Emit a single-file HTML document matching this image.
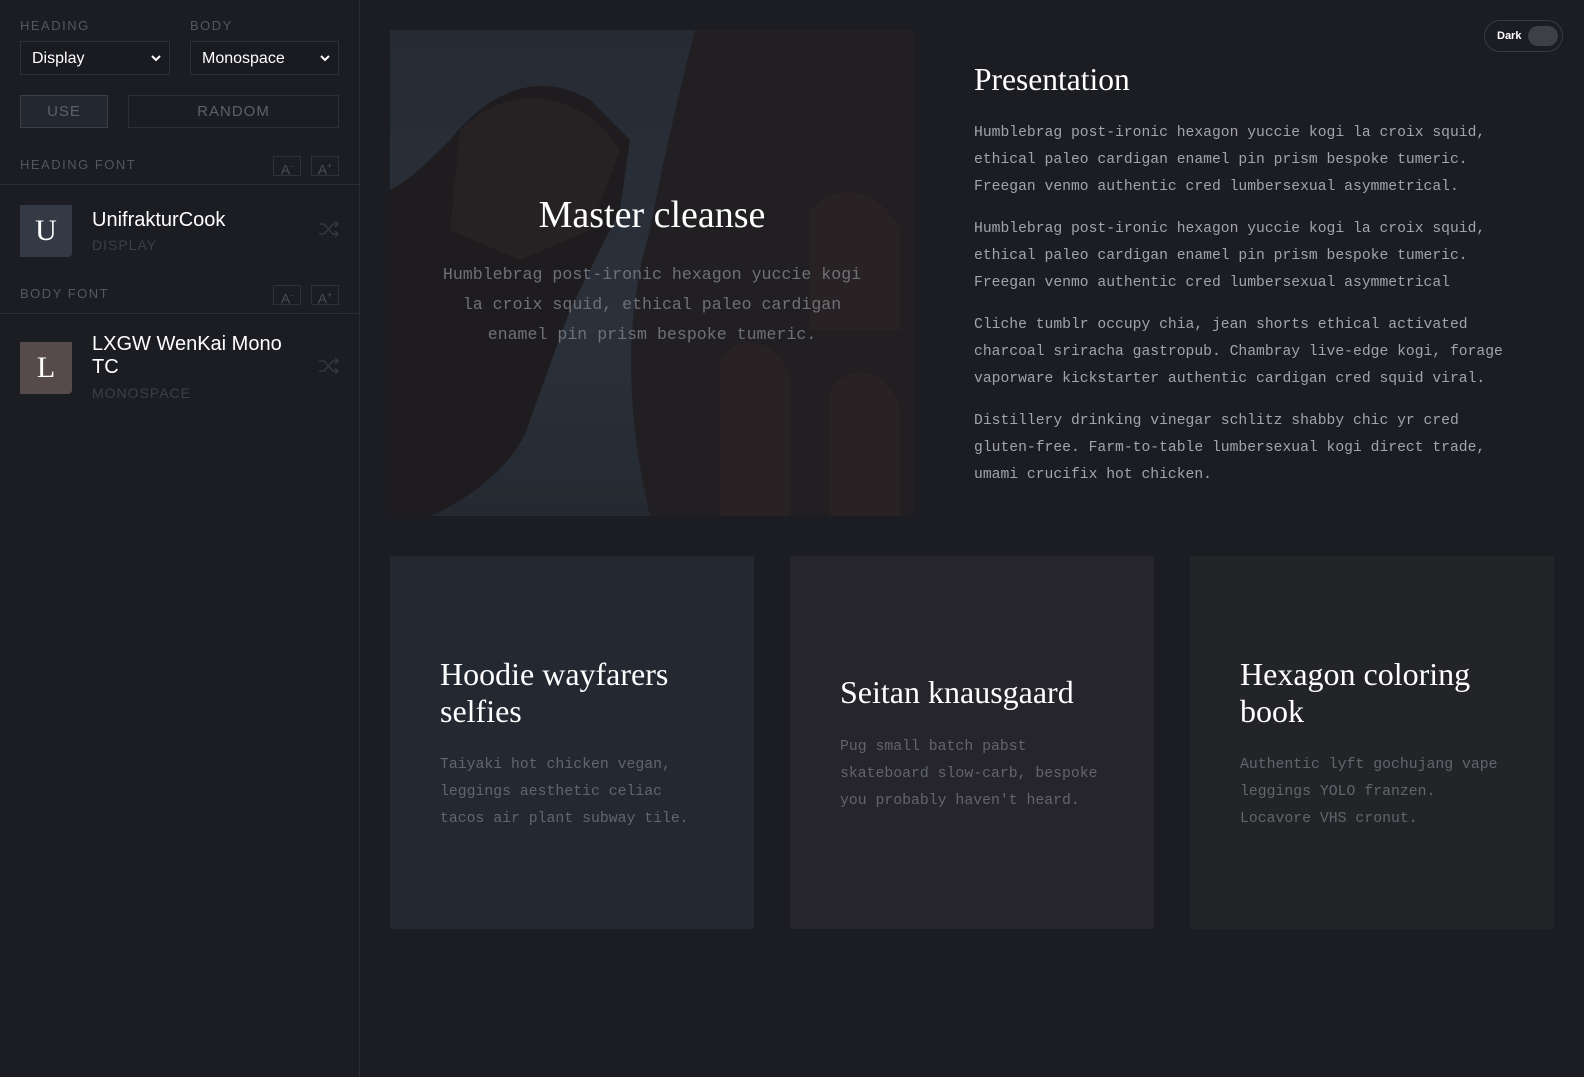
<!DOCTYPE html>
<html><head><meta charset="utf-8"><style>
*{box-sizing:border-box;margin:0;padding:0}
body{width:1584px;height:1077px;background:#1c1d22;font-family:"Liberation Sans",sans-serif;position:relative;overflow:hidden;color:#fff}
.side{position:absolute;left:0;top:0;width:360px;height:1077px;border-right:1px solid #2c2d33;background:#1c1d22}
.lbl{position:absolute;font-size:13px;letter-spacing:1.5px;color:#55575d}
.sel{position:absolute;height:34px;border:1px solid #2f3036;background:#1a1b20;font-size:16px;color:#fff;padding:8px 11px}
.sel svg{position:absolute;right:8px;top:13px}
.btn{position:absolute;height:33px;border:1px solid #34363d;font-size:15px;letter-spacing:1px;color:#5d6068;text-align:center;line-height:31px}
.ab{position:absolute;width:28px;height:20px;border:1px solid #303137;color:#4b4d53;font-size:14px;text-align:center;line-height:18px}
.hr{position:absolute;left:0;width:359px;height:1px;background:#2c2d33}
.tile{position:absolute;left:20px;width:52px;height:52px;border-radius:0 0 4px 0;font-family:"Liberation Serif",serif;font-size:30px;text-align:center;line-height:52px;color:#fff}
.nm{position:absolute;left:92px;font-size:20px;color:#fff;line-height:23px}
.sub{position:absolute;left:92px;font-size:14px;letter-spacing:1px;color:#3d3f45}
.shuf{position:absolute;left:318px}
.hero{position:absolute;left:390px;top:30px;width:524px;height:486px;overflow:hidden;background:linear-gradient(180deg,#262b33 0%,#2a313b 60%,#252a31 100%)}
.mono{font-family:"Liberation Mono",monospace}
.serif{font-family:"Liberation Serif",serif}
.p{position:absolute;left:974px;width:600px;font-size:14.7px;line-height:27.2px;color:#a2a4aa;white-space:nowrap}
.card{position:absolute;top:556px;width:364px;height:373px}
.card h3{position:absolute;left:50px;font-family:"Liberation Serif",serif;font-weight:normal;font-size:32px;line-height:37px;color:#fff;white-space:nowrap}
.card p{position:absolute;left:50px;width:300px;font-family:"Liberation Mono",monospace;font-size:14.8px;line-height:27px;color:#62656c;white-space:nowrap}
</style></head><body>
<div class="side">
<div class="lbl" style="left:20px;top:18px">HEADING</div>
<div class="lbl" style="left:190px;top:18px">BODY</div>
<div class="sel" style="left:20px;top:41px;width:150px">Display<svg width="10" height="7"><path d="M1 1l4 4 4-4" stroke="#fff" stroke-width="2" fill="none"/></svg></div>
<div class="sel" style="left:190px;top:41px;width:149px">Monospace<svg width="10" height="7"><path d="M1 1l4 4 4-4" stroke="#fff" stroke-width="2" fill="none"/></svg></div>
<div class="btn" style="left:20px;top:95px;width:88px;background:#23272f;border-color:#3a3f48">USE</div>
<div class="btn" style="left:128px;top:95px;width:211px;border-color:#2e2f35">RANDOM</div>
<div class="lbl" style="left:20px;top:157px">HEADING FONT</div>
<div class="ab" style="left:273px;top:156px">A<sup style="font-size:9px">-</sup></div>
<div class="ab" style="left:311px;top:156px">A<sup style="font-size:9px">+</sup></div>
<div class="hr" style="top:184px"></div>
<div class="tile" style="top:205px;background:#333a45">U</div>
<div class="nm" style="top:209px">UnifrakturCook</div>
<div class="sub" style="top:237px">DISPLAY</div>
<svg class="shuf" style="top:220px" width="22" height="18" viewBox="0 0 22 18" fill="none" stroke="#35373d" stroke-width="1.5"><path d="M1 4h5l9 10h5M1 14h5l9-10h5M17 1l3 3-3 3M17 11l3 3-3 3"/></svg>
<div class="lbl" style="left:20px;top:286px">BODY FONT</div>
<div class="ab" style="left:273px;top:285px">A<sup style="font-size:9px">-</sup></div>
<div class="ab" style="left:311px;top:285px">A<sup style="font-size:9px">+</sup></div>
<div class="hr" style="top:313px"></div>
<div class="tile" style="top:342px;background:#574a4a">L</div>
<div class="nm" style="top:333px">LXGW WenKai Mono<br>TC</div>
<div class="sub" style="top:385px">MONOSPACE</div>
<svg class="shuf" style="top:357px" width="22" height="18" viewBox="0 0 22 18" fill="none" stroke="#35373d" stroke-width="1.5"><path d="M1 4h5l9 10h5M1 14h5l9-10h5M17 1l3 3-3 3M17 11l3 3-3 3"/></svg>
</div>

<div class="hero">
<svg width="524" height="486" style="position:absolute;left:0;top:0">
<path d="M305 0 L524 0 L524 486 L260 486 C240 400 230 300 260 200 C275 120 290 60 305 0Z" fill="#221f23"/>
<path d="M60 110 C100 60 150 40 200 70 L240 110 L230 180 L180 280 L140 390 C130 430 80 470 40 486 L0 486 L0 160 C20 150 40 130 60 110Z" fill="#1f1c1f"/>
<path d="M70 100 C120 50 190 60 230 120 L200 200 L130 230 L60 200Z" fill="#262223"/>
<path d="M420 180 C450 150 490 160 510 200 L510 300 L420 300Z" fill="#2e2526" opacity=".6"/>
<path d="M330 330 C350 300 390 310 400 350 L400 486 L330 486Z" fill="#2e2526" opacity=".5"/>
<path d="M440 360 C460 330 500 340 510 380 L510 486 L440 486Z" fill="#2e2526" opacity=".5"/>
</svg>
<div class="serif" style="position:absolute;left:0;width:524px;top:163px;text-align:center;font-size:38px;color:#fff">Master cleanse</div>
<div class="mono" style="position:absolute;left:40px;width:444px;top:230px;text-align:center;font-size:16.6px;line-height:30px;color:#6e7178">Humblebrag post-ironic hexagon yuccie kogi la croix squid, ethical paleo cardigan enamel pin prism bespoke tumeric.</div>
</div>

<div style="position:absolute;left:1484px;top:20px;width:79px;height:32px;border:1px solid #3a3b41;border-radius:16px">
<span style="position:absolute;left:12px;top:9px;font-size:11px;font-weight:bold;color:#fff">Dark</span>
<span style="position:absolute;left:43px;top:5px;width:30px;height:20px;border-radius:10px;background:#3e4048"></span>
</div>

<div class="serif" style="position:absolute;left:974px;top:62px;font-size:31.5px;color:#fff">Presentation</div>
<div class="p mono" style="top:120px">Humblebrag post-ironic hexagon yuccie kogi la croix squid,<br>ethical paleo cardigan enamel pin prism bespoke tumeric.<br>Freegan venmo authentic cred lumbersexual asymmetrical.</div>
<div class="p mono" style="top:216px">Humblebrag post-ironic hexagon yuccie kogi la croix squid,<br>ethical paleo cardigan enamel pin prism bespoke tumeric.<br>Freegan venmo authentic cred lumbersexual asymmetrical</div>
<div class="p mono" style="top:312px">Cliche tumblr occupy chia, jean shorts ethical activated<br>charcoal sriracha gastropub. Chambray live-edge kogi, forage<br>vaporware kickstarter authentic cardigan cred squid viral.</div>
<div class="p mono" style="top:408px">Distillery drinking vinegar schlitz shabby chic yr cred<br>gluten-free. Farm-to-table lumbersexual kogi direct trade,<br>umami crucifix hot chicken.</div>

<div class="card" style="left:390px;background:#242831"><h3 style="top:100px">Hoodie wayfarers<br>selfies</h3><p style="top:196px">Taiyaki hot chicken vegan,<br>leggings aesthetic celiac<br>tacos air plant subway tile.</p></div>
<div class="card" style="left:790px;background:#25252b"><h3 style="top:118px">Seitan knausgaard</h3><p style="top:178px">Pug small batch pabst<br>skateboard slow-carb, bespoke<br>you probably haven't heard.</p></div>
<div class="card" style="left:1190px;background:#232428"><h3 style="top:100px">Hexagon coloring<br>book</h3><p style="top:196px">Authentic lyft gochujang vape<br>leggings YOLO franzen.<br>Locavore VHS cronut.</p></div>
</body></html>
